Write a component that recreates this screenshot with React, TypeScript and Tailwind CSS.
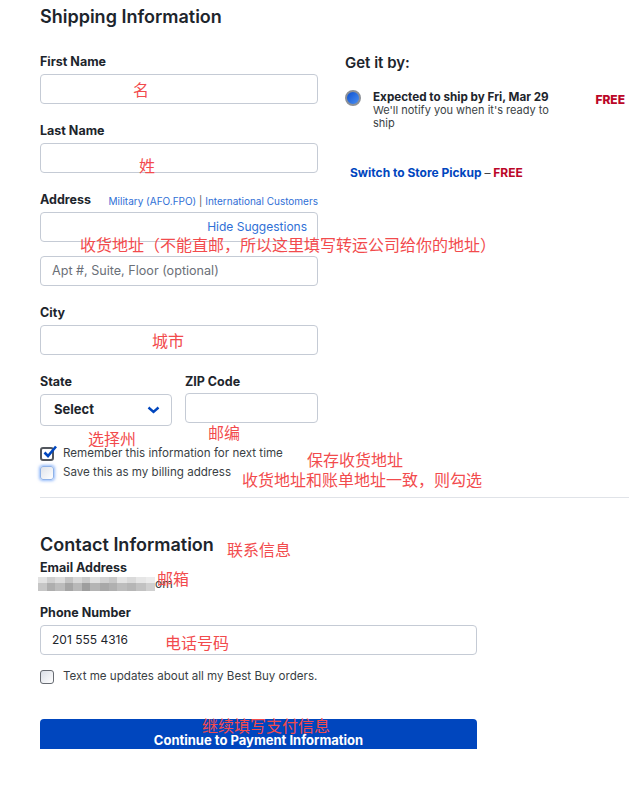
import React from "react";

const Label = ({ children }: { children: React.ReactNode }) => (
  <div className="text-[12.5px] font-bold leading-[16px] text-[#1d252c]">{children}</div>
);

const Box = ({ className = "", children }: { className?: string; children?: React.ReactNode }) => (
  <div
    className={
      "flex h-[30px] items-center rounded-[4px] border border-[#c5cbd5] bg-white " + className
    }
  >
    {children}
  </div>
);

const CheckRow = ({
  kind,
  children,
}: {
  kind: "checked" | "focus" | "plain";
  children: React.ReactNode;
}) => (
  <div className="flex h-[19px] items-center">
    {kind === "checked" && (
      <div className="relative h-[14px] w-[14px] rounded-[3px] border-2 border-[#53575e] bg-white">
        <svg className="absolute -top-[4px] left-[1px] h-[14px] w-[14px]" viewBox="0 0 14 14">
          <path d="M1.5 7.5 L5 11 L13 1.5" fill="none" stroke="#0046be" strokeWidth="2.6" />
        </svg>
      </div>
    )}
    {kind === "focus" && (
      <div className="h-[14px] w-[14px] rounded-[3px] border border-[#8fb2e8] bg-gradient-to-br from-[#dfe3ea] to-white shadow-[0_0_3px_1px_rgba(59,130,246,0.55)]" />
    )}
    {kind === "plain" && (
      <div className="h-[14px] w-[14px] rounded-[3px] border-[1.5px] border-[#676b72] bg-gradient-to-br from-[#dadee6] to-white" />
    )}
    <span className="ml-[9px] text-[11.6px] leading-[19px] text-[#3a3f45]">{children}</span>
  </div>
);

const Note = ({ className, children }: { className: string; children: React.ReactNode }) => (
  <span
    className={
      "absolute whitespace-nowrap text-[16px] leading-[16px] text-[#f24b4d] [font-family:'Noto_Sans_CJK_SC',sans-serif] " +
      className
    }
  >
    {children}
  </span>
);

// pixelated (hidden) email address
const mosaicTop = [
  "w-[9px] bg-[#e2e2e2]",
  "w-[8px] bg-[#cfcfcf]",
  "w-[10px] bg-[#dcdcdc]",
  "w-[8px] bg-[#c4c4c4]",
  "w-[9px] bg-[#d8d8d8]",
  "w-[8px] bg-[#cacaca]",
  "w-[10px] bg-[#e0e0e0]",
  "w-[9px] bg-[#d2d2d2]",
  "w-[8px] bg-[#c8c8c8]",
  "w-[10px] bg-[#e4e4e4]",
  "w-[9px] bg-[#dadada]",
  "w-[10px] bg-[#e6e6e6]",
  "w-[9px] bg-[#ececec]",
];
const mosaicBottom = [
  "w-[9px] bg-[#c6c6c6]",
  "w-[8px] bg-[#aeaeae]",
  "w-[10px] bg-[#bcbcbc]",
  "w-[8px] bg-[#a5a5a5]",
  "w-[9px] bg-[#b8b8b8]",
  "w-[8px] bg-[#9e9e9e]",
  "w-[10px] bg-[#b4b4b4]",
  "w-[9px] bg-[#a8a8a8]",
  "w-[8px] bg-[#b0b0b0]",
  "w-[10px] bg-[#bdbdbd]",
  "w-[9px] bg-[#b6b6b6]",
  "w-[10px] bg-[#c2c2c2]",
  "w-[9px] bg-[#d0d0d0]",
];

export default function App() {
  return (
    <div className="relative h-[791px] w-[629px] overflow-hidden bg-white [font-family:Inter,'Liberation_Sans',sans-serif]">
      <div className="flex">
        {/* left column */}
        <div className="ml-[40px] w-[278px] pt-[5px]">
          <h2 className="text-[18px] font-semibold leading-[24px] text-[#1d252c]">
            Shipping Information
          </h2>

          <div className="mt-[25px]">
            <Label>First Name</Label>
            <Box className="mt-[4px]" />
          </div>

          <div className="mt-[19px]">
            <Label>Last Name</Label>
            <Box className="mt-[4px]" />
          </div>

          <div className="mt-[19px]">
            <div className="flex items-end justify-between">
              <Label>Address</Label>
              <div className="pb-[1px] text-[10px] leading-[12px] text-[#2f6fd6]">
                Military (AFO.FPO) <span className="text-[#555]">|</span> International Customers
              </div>
            </div>
            <Box className="mt-[4px] justify-end pr-[10px]">
              <span className="text-[12px] text-[#2f6fd6]">Hide Suggestions</span>
            </Box>
            <Box className="mt-[14px] pl-[11px]">
              <span className="text-[12.6px] text-[#6b7078]">Apt #, Suite, Floor (optional)</span>
            </Box>
          </div>

          <div className="mt-[19px]">
            <Label>City</Label>
            <Box className="mt-[4px]" />
          </div>

          <div className="mt-[19px] flex gap-[13px]">
            <div className="w-[132px]">
              <Label>State</Label>
              <div className="mt-[4px] flex h-[32px] items-center justify-between rounded-[4px] border border-[#c5cbd5] pl-[13px] pr-[11px]">
                <span className="text-[13px] font-bold text-[#1d252c]">Select</span>
                <svg width="13" height="8" viewBox="0 0 13 8">
                  <path d="M1.5 1.5 L6.5 6 L11.5 1.5" fill="none" stroke="#0046be" strokeWidth="2.4" />
                </svg>
              </div>
            </div>
            <div className="w-[133px]">
              <Label>ZIP Code</Label>
              <Box className="mt-[3px]" />
            </div>
          </div>

          <div className="mt-[18px]">
            <CheckRow kind="checked">Remember this information for next time</CheckRow>
            <CheckRow kind="focus">Save this as my billing address</CheckRow>
          </div>
        </div>

        {/* right column */}
        <div className="ml-[27px] w-[280px] pt-[53px]">
          <div className="text-[15px] font-semibold leading-[20px] text-[#1d252c]">Get it by:</div>
          <div className="mt-[17px] flex items-start">
            <div className="h-[16px] w-[16px] rounded-full border-2 border-[#8c9097] bg-gradient-to-br from-[#0a4fcf] to-[#4b8ff2]" />
            <div className="ml-[12px] w-[190px] pt-[1px] text-[11px] leading-[13px] text-[#3a3f45]">
              <div className="text-[11.7px] font-bold text-[#1d252c]">Expected to ship by Fri, Mar 29</div>
              <div>We'll notify you when it's ready to ship</div>
            </div>
            <div className="ml-auto pt-[3px] text-[12px] font-extrabold leading-[13px] text-[#bb0628]">
              FREE
            </div>
          </div>
          <div className="ml-[5px] mt-[36px] text-[12px] font-bold leading-[14px] text-[#0046be]">
            Switch to Store Pickup <span className="font-normal text-[#444]">–</span>{" "}
            <span className="text-[#bb0628]">FREE</span>
          </div>
        </div>
      </div>

      <div className="ml-[40px] mt-[15px] h-px bg-[#e0e3e8]" />

      {/* contact */}
      <div className="ml-[40px] w-[437px]">
        <h2 className="mt-[35px] text-[18px] font-semibold leading-[24px] text-[#1d252c]">
          Contact Information
        </h2>
        <div className="mt-[3px]">
          <Label>Email Address</Label>
          <div className="flex h-[16px] items-center">
            <div className="-ml-[2px] flex w-[117px] flex-col">
              <div className="flex h-[6px]">
                {mosaicTop.map((c, i) => (
                  <div key={i} className={c} />
                ))}
              </div>
              <div className="flex h-[8px]">
                {mosaicBottom.map((c, i) => (
                  <div key={i} className={c} />
                ))}
              </div>
            </div>
            <span className="text-[12px] text-[#3a3f45]">om</span>
          </div>
        </div>
        <div className="mt-[13px]">
          <Label>Phone Number</Label>
          <Box className="mt-[4px] pl-[11px]">
            <span className="text-[12px] text-[#1d252c]">201 555 4316</span>
          </Box>
        </div>
        <div className="mt-[12px]">
          <CheckRow kind="plain">Text me updates about all my Best Buy orders.</CheckRow>
        </div>
        <div className="mt-[33px] flex h-[30px] items-end justify-center rounded-t-[4px] bg-[#0046be] pb-[1px]">
          <span className="text-[13px] font-bold leading-[16px] text-white">
            Continue to Payment Information
          </span>
        </div>
      </div>

      {/* annotations */}
      <Note className="left-[133px] top-[81px]">名</Note>
      <Note className="left-[139px] top-[157px]">姓</Note>
      <Note className="left-[80px] top-[236px]">收货地址（不能直邮，所以这里填写转运公司给你的地址）</Note>
      <Note className="left-[152px] top-[332px]">城市</Note>
      <Note className="left-[88px] top-[430px]">选择州</Note>
      <Note className="left-[208px] top-[424px]">邮编</Note>
      <Note className="left-[307px] top-[451px]">保存收货地址</Note>
      <Note className="left-[242px] top-[471px]">收货地址和账单地址一致，则勾选</Note>
      <Note className="left-[227px] top-[541px]">联系信息</Note>
      <Note className="left-[157px] top-[570px]">邮箱</Note>
      <Note className="left-[165px] top-[634px]">电话号码</Note>
      <Note className="left-[202px] top-[717px]">继续填写支付信息</Note>
    </div>
  );
}
